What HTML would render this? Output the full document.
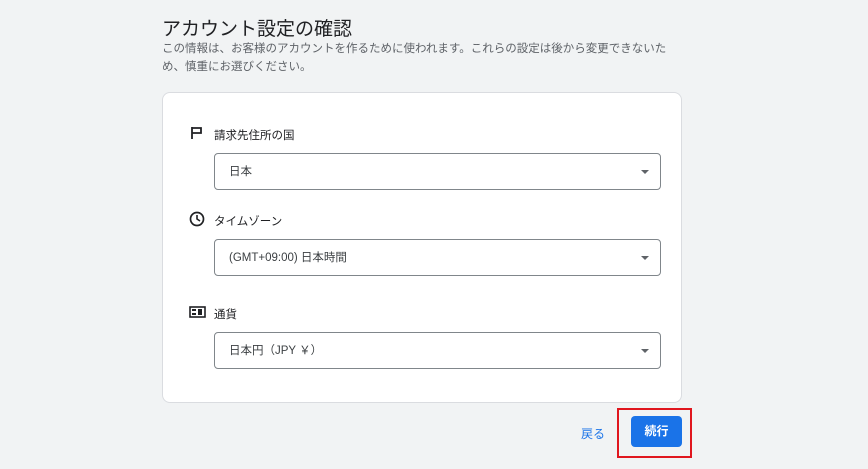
<!DOCTYPE html><html><head><meta charset="utf-8"><style>
body{margin:0;width:868px;height:469px;background:#f1f3f4;font-family:"Liberation Sans","Noto Sans CJK JP",sans-serif;position:relative;overflow:hidden;color:#202124}
.a{position:absolute}
h1{position:absolute;left:162px;top:14px;margin:0;font-size:19px;font-weight:400;color:#202124}
.d{position:absolute;left:162px;top:40px;font-size:11.5px;line-height:18px;color:#5f6368;width:520px}
.card{position:absolute;left:162px;top:92px;width:518px;height:309px;background:#fff;border:1px solid #dadce0;border-radius:8px}
.lbl{position:absolute;left:214px;font-size:11.5px;color:#202124}
.sel{position:absolute;left:214px;width:445px;height:35px;border:1px solid #80868b;border-radius:4px;background:#fff;font-size:11.5px;line-height:37px;box-sizing:content-box;color:#3c4043}
.sel span{position:absolute;left:14px}
.sel i{position:absolute;right:11px;top:16px;width:0;height:0;border-left:4px solid transparent;border-right:4px solid transparent;border-top:4px solid #5f6368}
</style></head><body>
<h1>アカウント設定の確認</h1>
<div class="d">この情報は、お客様のアカウントを作るために使われます。これらの設定は後から変更できないた<br>め、慎重にお選びください。</div>
<div class="card"></div>
<svg class="a" style="left:190px;top:126px" width="14" height="14" viewBox="0 0 14 14"><path d="M2 1v12M2 2h9v5H2" fill="none" stroke="#202124" stroke-width="1.8"/></svg>
<div class="lbl" style="top:127px">請求先住所の国</div>
<div class="sel" style="top:153px"><span>日本</span><i></i></div>
<svg class="a" style="left:189px;top:211px" width="16" height="16" viewBox="0 0 16 16"><circle cx="8" cy="8" r="6.5" fill="none" stroke="#202124" stroke-width="1.7"/><path d="M8 4v4l3 2" fill="none" stroke="#202124" stroke-width="1.6"/></svg>
<div class="lbl" style="top:213px">タイムゾーン</div>
<div class="sel" style="top:239px"><span>(GMT+09:00) 日本時間</span><i></i></div>
<svg class="a" style="left:189px;top:306px" width="17" height="12" viewBox="0 0 17 12"><rect x="1" y="1" width="15" height="10" fill="none" stroke="#202124" stroke-width="1.6"/><rect x="3" y="3" width="4" height="2" fill="#202124"/><rect x="9" y="3" width="4" height="6" fill="#202124"/><rect x="3" y="7" width="4" height="2" fill="#202124"/></svg>
<div class="lbl" style="top:306px">通貨</div>
<div class="sel" style="top:332px"><span>日本円（JPY ￥）</span><i></i></div>
<div class="a" style="left:581px;top:425px;font-size:12px;color:#1a73e8">戻る</div>
<div class="a" style="left:617px;top:408px;width:71px;height:46px;border:2px solid #e0161e"></div>
<div class="a" style="left:631px;top:416px;width:51px;height:31px;background:#1a73e8;border-radius:4px;color:#fff;font-size:12px;font-weight:bold;text-align:center;line-height:31px">続行</div>
</body></html>
